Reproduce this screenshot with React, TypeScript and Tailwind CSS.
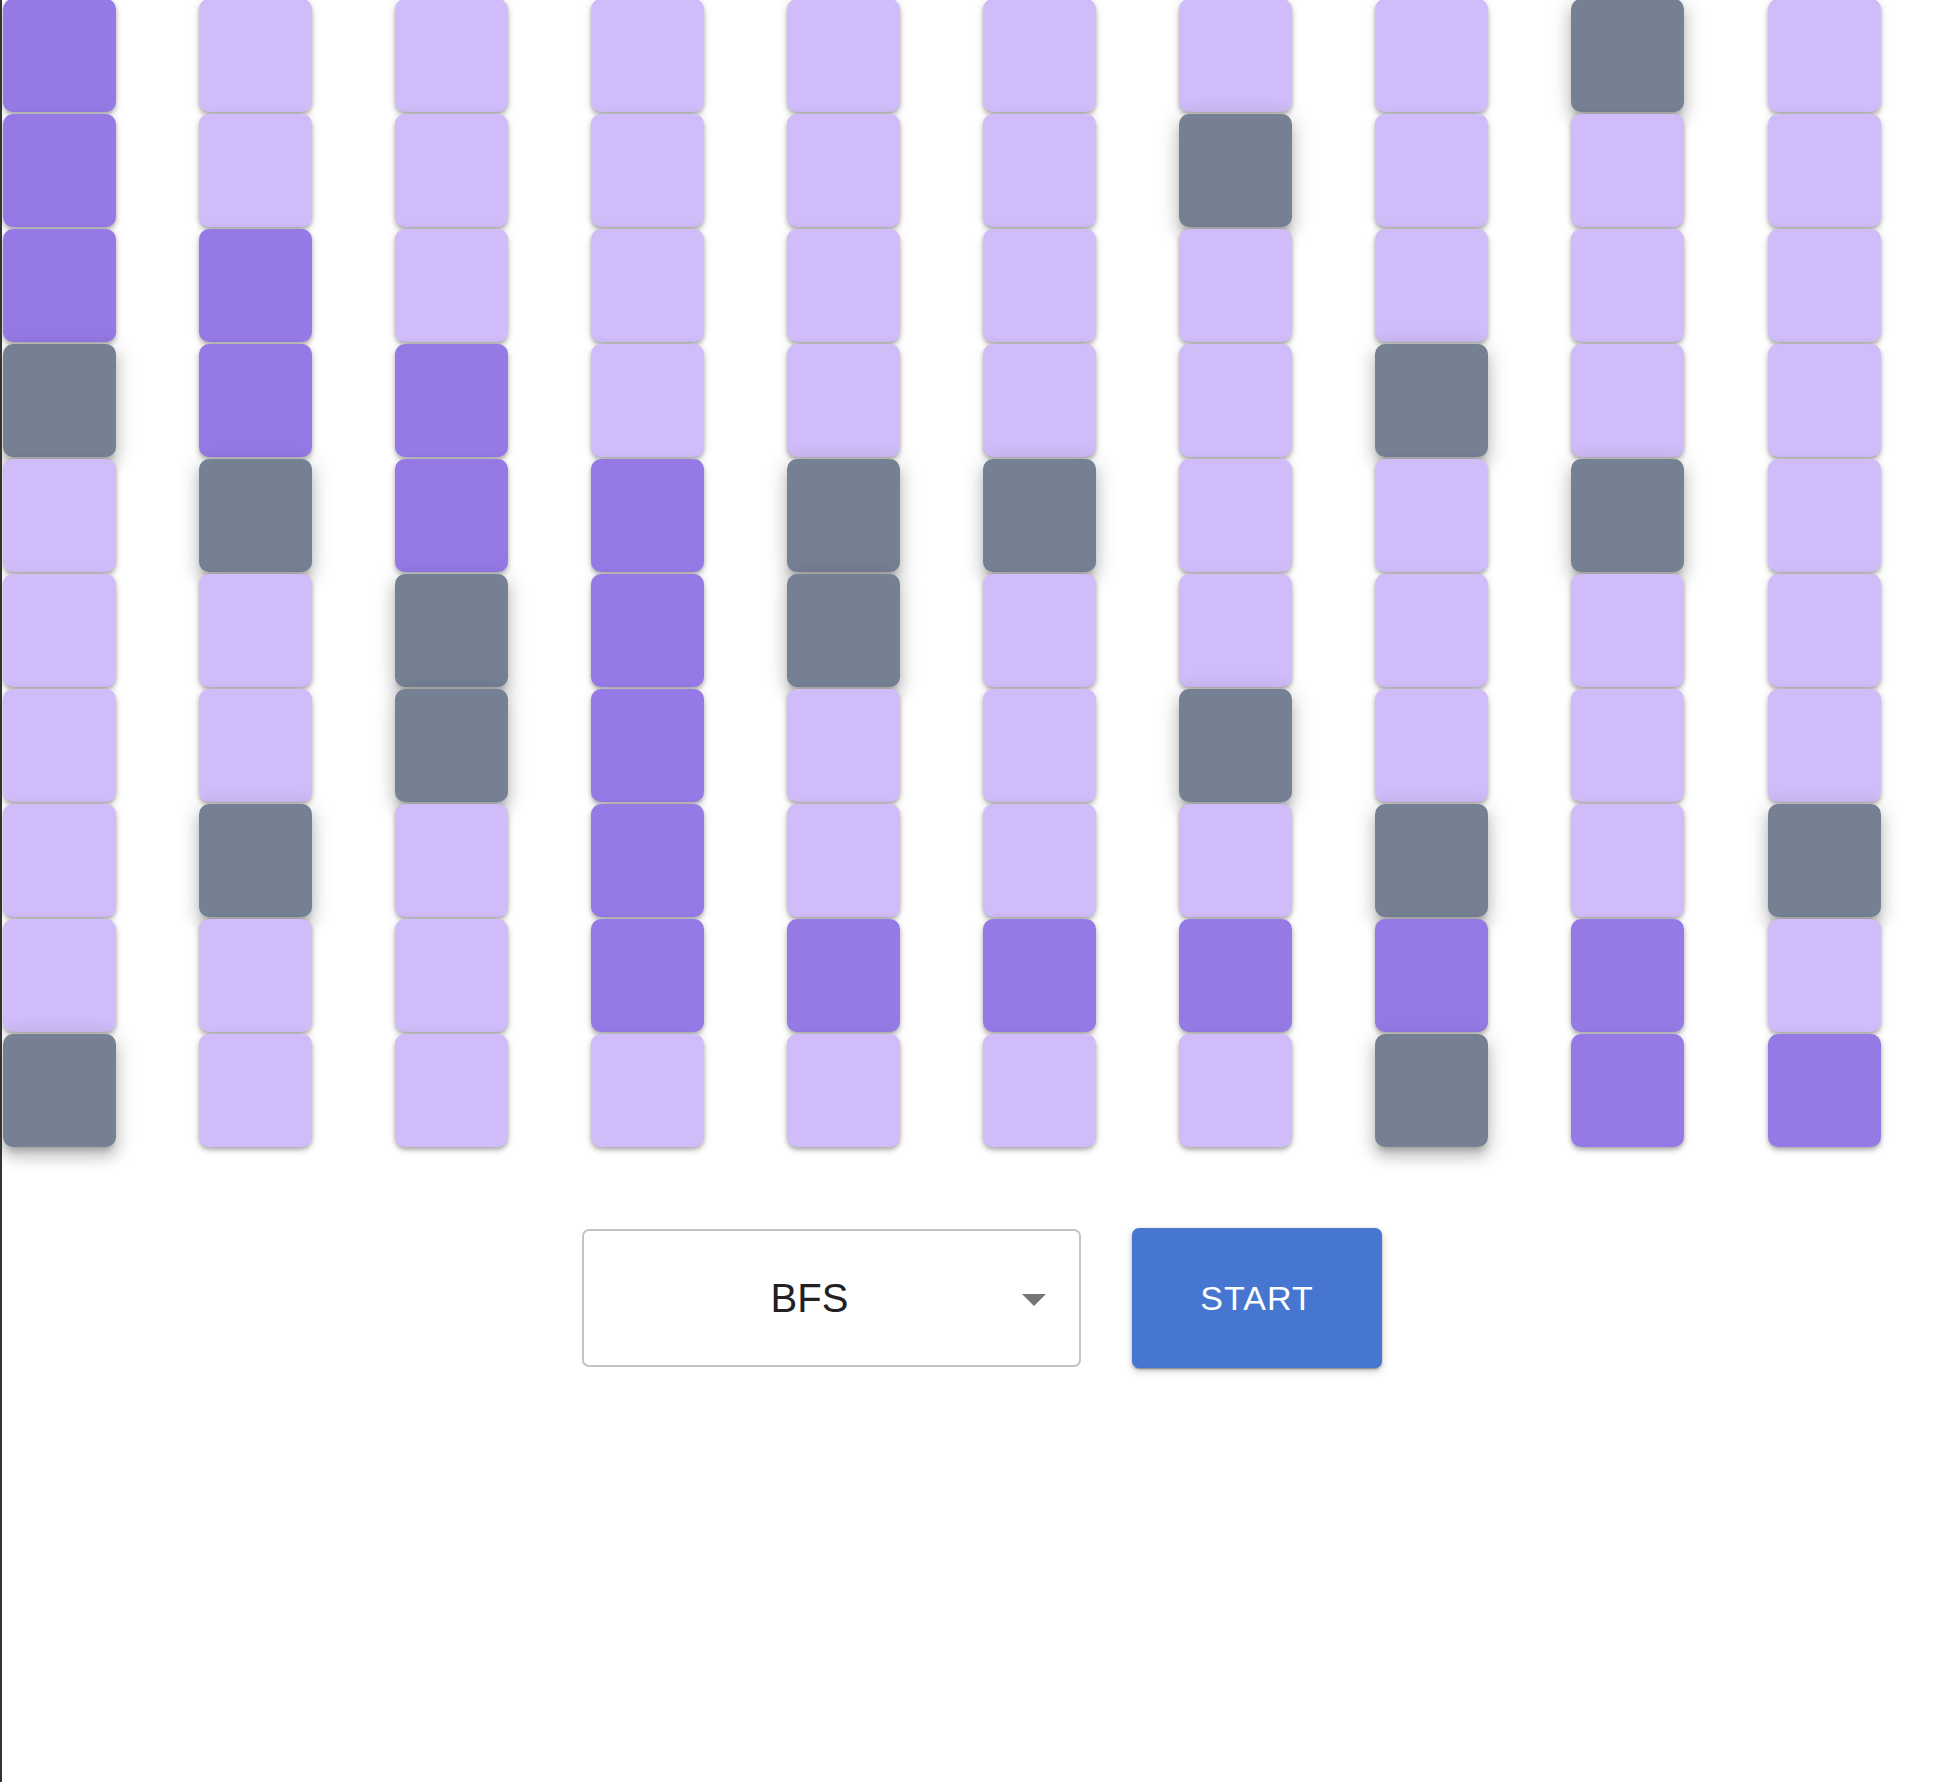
const columns = [
  'DDDGLLLLLG',
  'LLDDGLLGLL',
  'LLLDDGGLLL',
  'LLLLDDDDDL',
  'LLLLGGLLDL',
  'LLLLGLLLDL',
  'LGLLLLGLDL',
  'LLLGLLLGDG',
  'GLLLGLLLDD',
  'LLLLLLLGLD',
]

function Cell({ kind }: { kind: string }) {
  if (kind === 'G') {
    return (
      <div className="w-[113px] h-[113px] rounded-[10px] bg-[#758093] shadow-[0_6px_6px_-3px_rgba(0,0,0,0.2),0_10px_14px_1px_rgba(0,0,0,0.14),0_4px_20px_4px_rgba(0,0,0,0.12)]" />
    )
  }
  if (kind === 'D') {
    return (
      <div className="w-[113px] h-[113px] rounded-[10px] bg-[#957ae6] shadow-[0_2px_4px_-1px_rgba(0,0,0,0.2),0_4px_5px_0_rgba(0,0,0,0.14),0_1px_10px_0_rgba(0,0,0,0.12)]" />
    )
  }
  return (
    <div className="w-[113px] h-[113px] rounded-[10px] bg-[#d0bcf8] shadow-[0_2px_4px_-1px_rgba(0,0,0,0.2),0_4px_5px_0_rgba(0,0,0,0.14),0_1px_10px_0_rgba(0,0,0,0.12)]" />
  )
}

export default function App() {
  return (
    <div className="min-h-screen bg-white border-l-2 border-[#333333] font-['Liberation_Sans',Arial,sans-serif] overflow-hidden">
      <div className="flex gap-x-[83.1px] pl-[0.7px] -mt-px">
        {columns.map((col, i) => (
          <div key={i} className="flex flex-col gap-[2px]">
            {col.split('').map((k, j) => (
              <Cell key={j} kind={k} />
            ))}
          </div>
        ))}
      </div>

      <div className="flex justify-center items-center gap-[51px] mt-[81px] pl-[5px]">
        <div className="relative w-[499px] h-[138px] rounded-[7px] border-2 border-[#c4c4c4] bg-white flex items-center">
          <span className="flex-1 text-center pr-[44px] text-[40px] text-[#212121]">BFS</span>
          <svg className="absolute right-[33px] top-[63px]" width="24" height="12" viewBox="0 0 24 12">
            <polygon points="0,0 24,0 12,12" fill="#757575" />
          </svg>
        </div>
        <button className="w-[250px] h-[140px] rounded-[7px] bg-[#4676cf] text-white text-[34px] font-normal tracking-[0.03em] shadow-[0_3px_1px_-2px_rgba(0,0,0,0.2),0_2px_2px_0_rgba(0,0,0,0.14),0_1px_5px_0_rgba(0,0,0,0.12),0_4px_8px_0_rgba(0,0,0,0.15)]">
          START
        </button>
      </div>
    </div>
  )
}
